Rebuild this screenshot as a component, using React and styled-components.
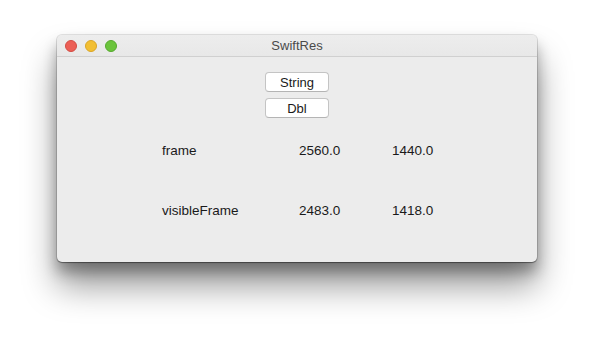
import React from "react";
import styled, { createGlobalStyle } from "styled-components";

const GlobalStyle = createGlobalStyle`
  body {
    margin: 0;
    background: #ffffff;
    font-family: "Liberation Sans", Arial, sans-serif;
  }
`;

const Page = styled.div`
  width: 594px;
  height: 341px;
  padding: 35px 0 0 57px;
  box-sizing: border-box;
`;

const Window = styled.div`
  width: 480px;
  height: 227px;
  display: flex;
  flex-direction: column;
  background: #ececec;
  border-radius: 5px;
  box-shadow: 0 0 0 1px rgba(0, 0, 0, 0.1), 0 1px 1px rgba(0, 0, 0, 0.35),
    0 10px 14px rgba(0, 0, 0, 0.3), 0 24px 34px rgba(0, 0, 0, 0.4);
  overflow: hidden;
`;

const TitleBar = styled.div`
  position: relative;
  height: 21px;
  display: flex;
  align-items: center;
  justify-content: center;
  background: linear-gradient(#ededed, #e8e8e8);
  border-bottom: 1px solid #d0d0d0;
`;

const Lights = styled.div`
  position: absolute;
  left: 8px;
  top: 5px;
  display: flex;
  gap: 8px;
`;

const Light = styled.span`
  width: 12px;
  height: 12px;
  border-radius: 50%;
  box-sizing: border-box;
  background: ${(p) => p.color};
  border: 1px solid ${(p) => p.edge};
`;

const Title = styled.div`
  font-size: 13px;
  color: #4a4a4a;
`;

const Body = styled.div`
  flex: 1;
  display: flex;
  flex-direction: column;
  align-items: center;
  padding-top: 15px;
`;

const Buttons = styled.div`
  display: flex;
  flex-direction: column;
  gap: 6px;
`;

const Button = styled.button`
  width: 64px;
  height: 20px;
  padding: 0;
  font-family: inherit;
  font-size: 13px;
  color: #1a1a1a;
  background: #ffffff;
  border: 1px solid #c4c4c4;
  border-bottom-color: #b4b4b4;
  border-radius: 4px;
`;

const Table = styled.div`
  align-self: stretch;
  display: grid;
  grid-template-columns: 137px 93px auto;
  row-gap: 44px;
  padding: 25px 0 0 105px;
  font-size: 13.5px;
  color: #1a1a1a;
`;

const Cell = styled.div`
  line-height: 16px;
`;

const rows = [
  ["frame", "2560.0", "1440.0"],
  ["visibleFrame", "2483.0", "1418.0"],
];

export default function App() {
  return (
    <Page>
      <GlobalStyle />
      <Window>
        <TitleBar>
          <Lights>
            <Light color="#ec5f56" edge="#d24c43" />
            <Light color="#f2bf33" edge="#d9a526" />
            <Light color="#6bc43c" edge="#56a82e" />
          </Lights>
          <Title>SwiftRes</Title>
        </TitleBar>
        <Body>
          <Buttons>
            <Button>String</Button>
            <Button>Dbl</Button>
          </Buttons>
          <Table>
            {rows.map((r) =>
              r.map((c, i) => <Cell key={r[0] + i}>{c}</Cell>)
            )}
          </Table>
        </Body>
      </Window>
    </Page>
  );
}
